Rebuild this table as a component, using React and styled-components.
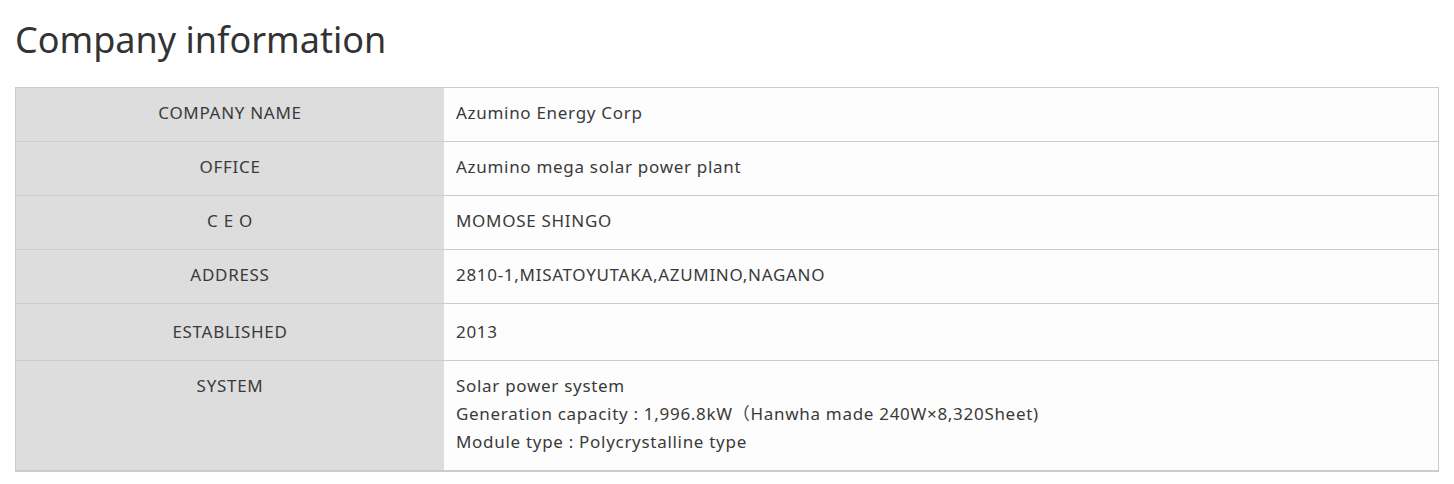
import React from "react";
import styled, { createGlobalStyle } from "styled-components";

const rows = [
  { label: "COMPANY NAME", value: ["Azumino Energy Corp"] },
  { label: "OFFICE", value: ["Azumino mega solar power plant"] },
  { label: "C E O", value: ["MOMOSE SHINGO"] },
  { label: "ADDRESS", value: ["2810-1,MISATOYUTAKA,AZUMINO,NAGANO"] },
  { label: "ESTABLISHED", value: ["2013"], roomy: true },
  {
    label: "SYSTEM",
    value: [
      "Solar power system",
      "Generation capacity : 1,996.8kW\uff08Hanwha made 240W\u00d78,320Sheet)",
      "Module type : Polycrystalline type",
    ],
  },
];

const GlobalStyle = createGlobalStyle`
  body {
    margin: 0;
    background: #ffffff;
    font-family: "Noto Sans", "Noto Sans CJK JP", sans-serif;
    color: #333333;
  }
`;

const App = () => {
  return (
    <Page>
      <GlobalStyle />
      <Title>Company information</Title>
      <InfoTable>
        {rows.map((row) => (
          <Row key={row.label} $roomy={row.roomy}>
            <Label>{row.label}</Label>
            <Value>
              {row.value.map((line) => (
                <div key={line}>{line}</div>
              ))}
            </Value>
          </Row>
        ))}
      </InfoTable>
    </Page>
  );
};

export default App;

const Page = styled.div`
  padding: 14px 15px 0 15px;
`;

const Title = styled.h2`
  margin: 0 0 21px 0;
  font-size: 36px;
  font-weight: 400;
  line-height: 52px;
  color: #333333;
`;

const InfoTable = styled.div`
  width: 1424px;
  border: 1px solid #cccccc;
  border-bottom: 2px solid #cccccc;
  box-sizing: border-box;
`;

const Row = styled.div`
  display: grid;
  grid-template-columns: 428px 1fr;
  border-top: 1px solid #cccccc;
  font-size: 17px;
  letter-spacing: 0.7px;
  line-height: 28px;

  & > div {
    padding-top: ${(p) => (p.$roomy ? 14 : 11)}px;
    padding-bottom: 14px;
  }

  &:first-child {
    border-top: none;
  }
`;

const Label = styled.div`
  background: #dddddd;
  text-align: center;
  padding-left: 10px;
  padding-right: 10px;
  color: #3a3a3a;
`;

const Value = styled.div`
  background: #fdfdfd;
  padding-left: 12px;
  padding-right: 12px;
  color: #3a3a3a;
`;
